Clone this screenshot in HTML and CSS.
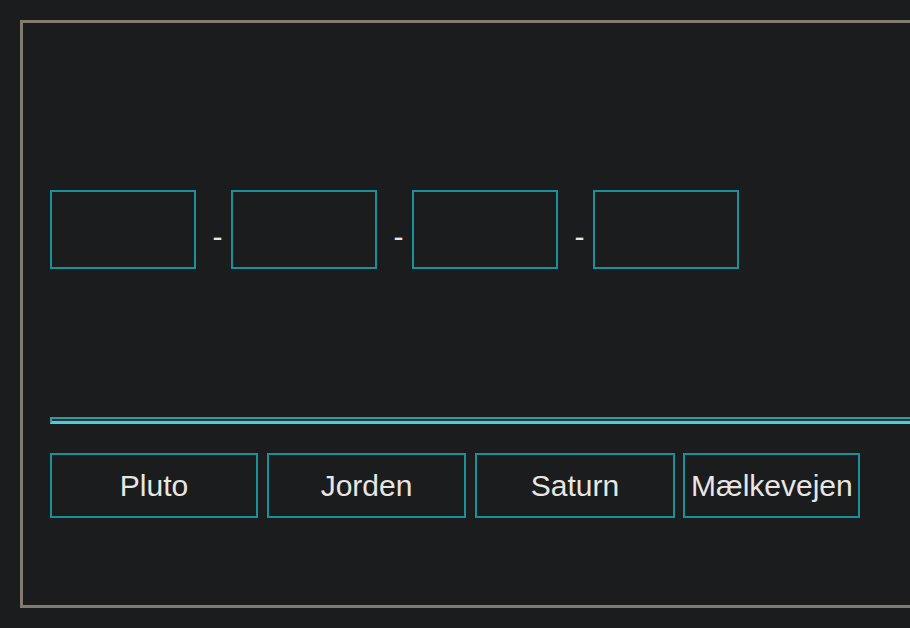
FILE: index.html
```html
<!DOCTYPE html>
<html lang="da">
<head>
<meta charset="utf-8">
<title>Planeter</title>
<link rel="stylesheet" href="styles.css">
</head>
<body>
<div class="frame">
  <div class="codes">
    <input class="code" type="text" aria-label="felt 1">
    <span class="dash">-</span>
    <input class="code" type="text" aria-label="felt 2">
    <span class="dash">-</span>
    <input class="code" type="text" aria-label="felt 3">
    <span class="dash">-</span>
    <input class="code" type="text" aria-label="felt 4">
  </div>
  <div class="rule"></div>
  <div class="choices">
    <button class="choice w-pluto">Pluto</button>
    <button class="choice w-jorden">Jorden</button>
    <button class="choice w-saturn">Saturn</button>
    <button class="choice w-mael">Mælkevejen</button>
  </div>
</div>
</body>
</html>
```

FILE: styles.css
```css
html, body {
  overflow: hidden;
}
body {
  margin: 0;
  padding: 20px 0 0 20px;
  background: #1b1c1e;
  color: #e8e6e3;
  font-family: "Liberation Sans", Arial, sans-serif;
}
.frame {
  width: 1100px;
  height: 582px;
  border: 3px solid #847b6f;
  padding: 0 0 0 27px;
  box-sizing: content-box;
}
.codes {
  display: flex;
  align-items: center;
  margin-top: 167px;
  height: 79px;
}
.code {
  width: 146px;
  height: 79px;
  box-sizing: border-box;
  margin: 0;
  border: 2px solid #1a909b;
  background: #1b1c1e;
  color: #e8e6e3;
  font: 30px "Liberation Sans", Arial, sans-serif;
  outline: none;
}
.dash {
  font-size: 30px;
  line-height: 34px;
  padding-top: 14px;
  margin: 0 8.5px 0 16.5px;
}
.rule {
  margin-top: 148px;
  height: 2px;
  border-top: 2px solid #3a959c;
  border-left: 2px solid #3a959c;
  border-bottom: 3px solid #4ecbd6;
  background: #1f3a3d;
}
.choices {
  display: flex;
  margin-top: 29px;
}
.choice {
  height: 65px;
  box-sizing: border-box;
  margin: 0 9px 0 0;
  padding: 0 6px;
  border: 2px solid #1a909b;
  background: #1b1c1e;
  color: #e8e6e3;
  font: 30px "Liberation Sans", Arial, sans-serif;
  white-space: nowrap;
}
.w-pluto { width: 208px; }
.w-jorden { width: 199px; }
.w-saturn { width: 200px; margin-right: 8px; }
.w-mael { width: 177px; }
```
